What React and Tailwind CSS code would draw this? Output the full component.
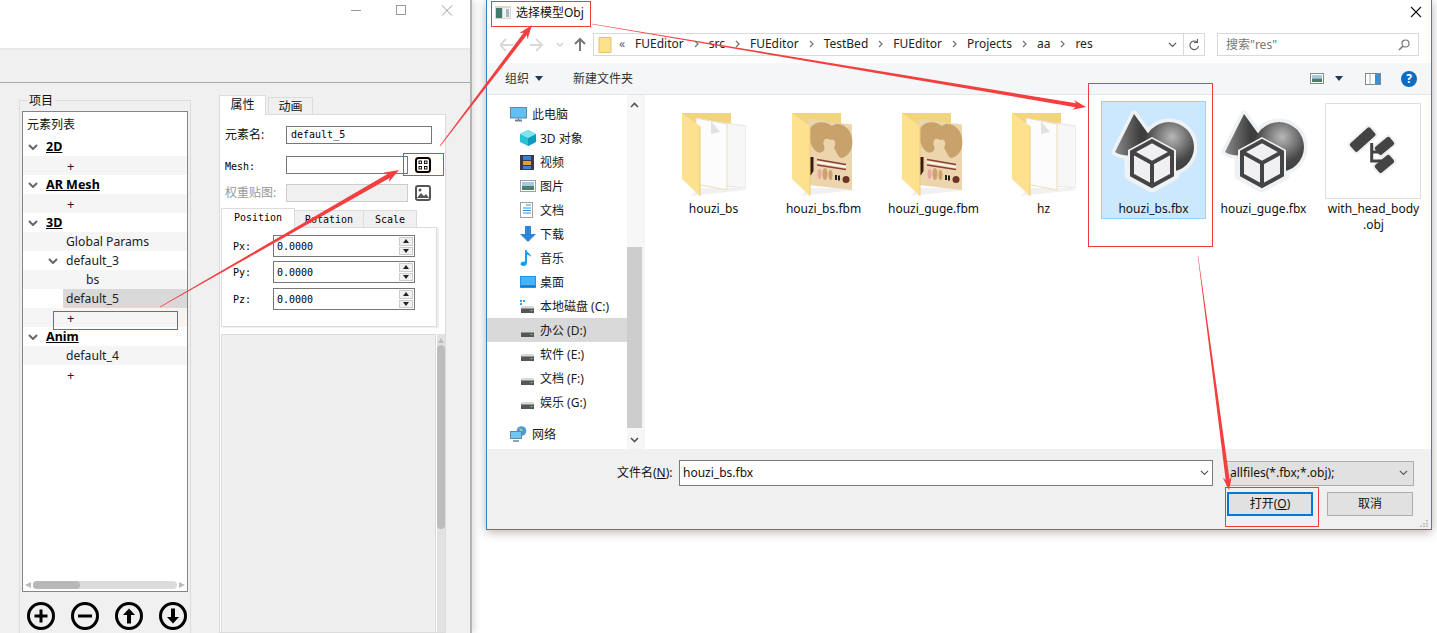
import React from "react";

const mono = "font-['DejaVu_Sans_Mono','Noto_Sans_CJK_SC',monospace]";

function arrowPts(x1, y1, x2, y2, tail, shaft, headW, headL) {
  const len = Math.hypot(x2 - x1, y2 - y1);
  const ux = (x2 - x1) / len, uy = (y2 - y1) / len;
  const nx = -uy, ny = ux;
  const bx = x2 - ux * headL, by = y2 - uy * headL;
  const nkx = x2 - ux * headL * 0.8, nky = y2 - uy * headL * 0.8;
  const p = [
    [x1 + nx * tail / 2, y1 + ny * tail / 2],
    [nkx + nx * shaft / 2, nky + ny * shaft / 2],
    [bx + nx * headW / 2, by + ny * headW / 2],
    [x2, y2],
    [bx - nx * headW / 2, by - ny * headW / 2],
    [nkx - nx * shaft / 2, nky - ny * shaft / 2],
    [x1 - nx * tail / 2, y1 - ny * tail / 2],
  ];
  return p.map((q) => q.map((v) => v.toFixed(1)).join(",")).join(" ");
}

function Annotations() {
  return (
    <svg className="absolute left-0 top-0 pointer-events-none" width="1437" height="633" viewBox="0 0 1437 633">
      <g fill="none" stroke="#ee3b3b" strokeWidth="1">
        <rect x="53.5" y="311.5" width="124" height="18" />
        <rect x="403.5" y="153.5" width="40" height="22" />
        <rect x="491.5" y="1.5" width="99" height="25" />
        <rect x="1088.5" y="83.5" width="124" height="163" />
        <rect x="1225.5" y="487.5" width="93" height="39" />
      </g>
      <g fill="#f33f3f">
        <polygon points={arrowPts(160, 307, 399, 170, 0.8, 4.5, 11, 15)} />
        <polygon points={arrowPts(440, 146, 532, 25, 0.8, 4, 10, 14)} />
        <polygon points={arrowPts(592, 24, 1086, 107, 0.6, 4, 10, 13)} />
        <polygon points={arrowPts(1198, 256, 1229, 490, 0.4, 4, 9, 13)} />
      </g>
    </svg>
  );
}

function Chevron({ size = 10, color = "#666", w = 2 }) {
  return (
    <svg width={size} height={size * 0.6} viewBox="0 0 10 6" className="shrink-0">
      <path d="M1 1l4 4 4-4" fill="none" stroke={color} strokeWidth={w} />
    </svg>
  );
}

function Row({ alt, bold, text, pl, chevronAt, sel, plus }) {
  const base = chevronAt !== undefined ? pl - chevronAt - 10 : pl;
  const look = bold
    ? "font-bold underline text-[12.5px] text-black"
    : plus
    ? "text-[13px] text-[#4a0a1a] pt-px"
    : "text-[12.2px] text-[#222]";
  return (
    <div className={`flex items-center shrink-0 h-[19px] ${alt ? "bg-[#f5f5f5]" : "bg-white"}`}>
      {chevronAt !== undefined && (
        <span style={{ marginLeft: chevronAt }} className="flex w-[10px]">
          <Chevron />
        </span>
      )}
      <span
        style={{ marginLeft: sel ? base - 3 : base }}
        className={`${sel ? "bg-[#d9d9d9] flex-1 pl-[3px] h-[19px] flex items-center" : ""} ${look} leading-[19px] whitespace-nowrap`}
      >
        {text}
      </span>
    </div>
  );
}

function CircleBtn({ kind }) {
  return (
    <svg width="28" height="28" viewBox="0 0 28 28">
      <circle cx="14" cy="14" r="12.5" fill="none" stroke="#000" strokeWidth="3" />
      {kind === "plus" && <path d="M14 7.500v13M7.500 14h13" stroke="#000" strokeWidth="3" />}
      {kind === "minus" && <path d="M7 14h14" stroke="#000" strokeWidth="3" />}
      {kind === "up" && <path d="M14 6.500l6 6.500h-4v8.500h-4V13H8z" fill="#000" />}
      {kind === "down" && <path d="M14 21.500l6-6.500h-4V6.500h-4V15H8z" fill="#000" />}
    </svg>
  );
}

function SpinBox() {
  return (
    <div className="flex items-center w-[142px] h-[22px] border border-[#777] bg-white pl-[3px] pr-[1px]">
      <span className={`${mono} text-[10px] text-black flex-1`}>0.0000</span>
      <div className="flex flex-col w-[14px] h-[18px] gap-px">
        <div className="flex-1 bg-[#f0f0f0] border border-[#ccc] flex items-center justify-center">
          <svg width="6" height="4" viewBox="0 0 6 4"><path d="M3 0l3 4H0z" fill="#222" /></svg>
        </div>
        <div className="flex-1 bg-[#f0f0f0] border border-[#ccc] flex items-center justify-center">
          <svg width="6" height="4" viewBox="0 0 6 4"><path d="M3 4l3-4H0z" fill="#222" /></svg>
        </div>
      </div>
    </div>
  );
}

function LeftWindow() {
  return (
    <div className="w-[472px] h-[633px] shrink-0 flex flex-col bg-[#f0f0f0] border-r-2 border-[#b4b4b4] shadow-[3px_0_6px_rgba(0,0,0,0.12)] overflow-hidden">
      <div className="h-[48px] bg-white flex items-start shrink-0">
        <svg width="469" height="24" viewBox="0 0 469 24">
          <path d="M351 10.500h10" stroke="#999" fill="none" />
          <rect x="396.500" y="5.500" width="9" height="9" stroke="#999" fill="none" />
          <path d="M442 5.500l10 10M452 5.500l-10 10" stroke="#999" fill="none" />
        </svg>
      </div>
      <div className="h-[2px] bg-[#e8e8e8] shrink-0" />
      <div className="h-[33px] bg-[#f0f0f0] border-b border-[#a8a8a8] shrink-0" />
      <div className="flex flex-1 pl-[19px] min-h-0">
        <fieldset className="w-[172px] h-[560px] mt-[9px] border border-[#dcdcdc] px-[2px] shrink-0">
          <legend className="ml-[5px] px-[2px] text-[12px] leading-[16px] text-[#111]">
            <span className="relative top-px">项目</span>
          </legend>
          <div className="mt-[3px] w-[166px] h-[481px] border border-[#84848c] bg-white flex flex-col">
            <div className="h-[25px] shrink-0 pl-[4px] text-[12px] leading-[25px] text-[#111]">元素列表</div>
            <Row bold text="2D" pl={23} chevronAt={5} />
            <Row alt text="+" pl={44} plus />
            <Row bold text="AR Mesh" pl={23} chevronAt={5} />
            <Row alt text="+" pl={44} plus />
            <Row bold text="3D" pl={23} chevronAt={5} />
            <Row alt text="Global Params" pl={43} />
            <Row text="default_3" pl={43} chevronAt={25} />
            <Row alt text="bs" pl={63} />
            <Row text="default_5" pl={43} sel />
            <Row alt text="+" pl={44} plus />
            <Row bold text="Anim" pl={23} chevronAt={5} />
            <Row alt text="default_4" pl={43} />
            <Row text="+" pl={44} plus />
            <div className="flex-1" />
            <div className="h-[12px] shrink-0 flex items-center pl-[2px] pr-[2px] gap-[1px]">
              <svg width="6" height="6" viewBox="0 0 6 6" className="shrink-0 mr-[1px]"><path d="M0 3l6-3v6z" fill="#bbb" /></svg>
              <div className="flex-1 h-[8px] bg-[#dcdcdc] rounded-[4px] flex">
                <div className="w-[47px] h-[8px] bg-[#b8b8b8] rounded-[4px]" />
              </div>
              <svg width="6" height="6" viewBox="0 0 6 6" className="shrink-0 ml-[1px]"><path d="M6 3L0 0v6z" fill="#bbb" /></svg>
            </div>
          </div>
          <div className="flex gap-[16px] mt-[10px] ml-[5px]">
            <CircleBtn kind="plus" />
            <CircleBtn kind="minus" />
            <CircleBtn kind="up" />
            <CircleBtn kind="down" />
          </div>
        </fieldset>
        <div className="ml-[28px] mt-[11px] w-[227px] flex flex-col">
          <div className="flex items-end h-[20px] shrink-0 text-[12px] text-[#111]">
            <div className="w-[47px] h-[20px] bg-white border border-b-0 border-[#dcdcdc] text-center leading-[18px] relative top-px">属性</div>
            <div className="w-[45px] h-[17px] ml-[2px] bg-[#f0f0f0] border border-b-0 border-[#dcdcdc] text-center leading-[17px]">动画</div>
          </div>
          <div className="flex-1 bg-white border border-[#dcdcdc] flex flex-col min-h-0">
            <div className="flex items-center h-[18px] mt-[11px] pl-[5px] shrink-0">
              <span className="w-[61px] text-[12px] text-[#111]">元素名:</span>
              <div className={`${mono} w-[146px] h-[18px] border border-[#777] text-[10px] leading-[15px] pl-[4px] text-black`}>default_5</div>
            </div>
            <div className="flex items-center h-[18px] mt-[12px] pl-[5px] shrink-0">
              <span className={`${mono} w-[61px] text-[10px] text-black pt-[2px]`}>Mesh:</span>
              <div className="w-[122px] h-[18px] border border-[#777]" />
              <svg width="16" height="16" viewBox="0 0 16 16" className="ml-[7px]">
                <rect x="1" y="1" width="14" height="14" rx="2.500" fill="none" stroke="#000" strokeWidth="2" />
                <rect x="4" y="4" width="2.500" height="2.500" fill="none" stroke="#000" strokeWidth="0.900" />
                <rect x="9.500" y="4" width="2.500" height="2.500" fill="none" stroke="#000" strokeWidth="0.900" />
                <rect x="4" y="9.500" width="2.500" height="2.500" fill="none" stroke="#000" strokeWidth="0.900" />
                <rect x="9.500" y="9.500" width="2.500" height="2.500" fill="none" stroke="#000" strokeWidth="0.900" />
              </svg>
            </div>
            <div className="flex items-center h-[18px] mt-[10px] pl-[5px] shrink-0">
              <span className="w-[61px] text-[12px] text-[#999]">权重贴图:</span>
              <div className="w-[122px] h-[18px] border border-[#ccc] bg-[#f0f0f0]" />
              <svg width="16" height="16" viewBox="0 0 16 16" className="ml-[7px]">
                <rect x="1" y="1" width="14" height="14" rx="2" fill="#fff" stroke="#555" strokeWidth="2" />
                <path d="M2 13l4-5 3 3 2-2 3 4z" fill="#555" />
                <circle cx="5" cy="5" r="1.500" fill="#555" />
              </svg>
            </div>
            <div className={`${mono} flex items-end ml-[1px] mt-[5px] h-[20px] shrink-0 text-[10px] text-black`}>
              <div className="w-[74px] h-[20px] bg-white border border-b-0 border-[#dcdcdc] text-center leading-[18px] relative top-px">Position</div>
              <div className="w-[69px] h-[17px] bg-[#f0f0f0] border border-b-0 border-l-0 border-[#dcdcdc] text-center leading-[17px]">Rotation</div>
              <div className="w-[53px] h-[17px] bg-[#f0f0f0] border border-b-0 border-l-0 border-[#dcdcdc] text-center leading-[17px]">Scale</div>
            </div>
            <div className={`${mono} ml-[1px] w-[216px] h-[100px] shrink-0 border border-[#dcdcdc] bg-white shadow-[2px_1px_0_#eeeeee] pt-[7px] pl-[11px] text-[10px] text-black`}>
              <div className="flex items-center"><span className="w-[40px]">Px:</span><SpinBox /></div>
              <div className="flex items-center mt-[4px]"><span className="w-[40px]">Py:</span><SpinBox /></div>
              <div className="flex items-center mt-[5px]"><span className="w-[40px]">Pz:</span><SpinBox /></div>
            </div>
            <div className="flex flex-1 mt-[7px] ml-[1px] min-h-0">
              <div className="w-[216px] bg-[#efefef] border border-[#dcdcdc] border-b-0" />
              <div className="w-[8px] ml-px bg-[#e2e2e2] flex flex-col items-center">
                <svg width="6" height="7" viewBox="0 0 6 7" className="mt-[3px] shrink-0"><path d="M3 1l3 5H0z" fill="#bbb" /></svg>
                <div className="w-[8px] h-[184px] mt-[1px] bg-[#bdbdbd] rounded-[4px] shrink-0" />
              </div>
            </div>
          </div>
        </div>
      </div>
    </div>
  );
}

function Sep() {
  return (
    <svg width="5" height="8" viewBox="0 0 5 8" className="shrink-0 mx-[10px]">
      <path d="M1 1l3 3-3 3" fill="none" stroke="#777" strokeWidth="1.300" />
    </svg>
  );
}

const navIcons = {
  pc: (
    <svg width="17" height="15" viewBox="0 0 17 15">
      <rect x="0.500" y="0.500" width="16" height="10.500" fill="#5ec0f5" stroke="#6d8396" />
      <path d="M5 13.500h7" stroke="#6d8396" strokeWidth="2" /><path d="M8.500 11v2" stroke="#6d8396" />
    </svg>
  ),
  cube: (
    <svg width="16" height="16" viewBox="0 0 16 16">
      <path d="M8 0l8 4v8l-8 4-8-4V4z" fill="#28c1d8" /><path d="M8 8l8-4v8l-8 4z" fill="#0d9cc0" /><path d="M8 0l8 4-8 4-8-4z" fill="#7fe3ee" />
    </svg>
  ),
  film: (
    <svg width="14" height="15" viewBox="0 0 14 15">
      <rect width="14" height="15" fill="#3a3a4a" />
      <rect x="3" y="1" width="8" height="4" fill="#3b7fd6" /><rect x="3" y="6" width="8" height="4" fill="#e0a030" /><rect x="3" y="11" width="8" height="3" fill="#3b7fd6" />
    </svg>
  ),
  pic: (
    <svg width="16" height="12" viewBox="0 0 16 12">
      <rect x="0.500" y="0.500" width="15" height="11" fill="#fff" stroke="#9aa0a6" />
      <rect x="2" y="2" width="12" height="4" fill="#a4c8e8" /><rect x="2" y="6" width="12" height="4" fill="#4a7f62" />
    </svg>
  ),
  doc: (
    <svg width="13" height="16" viewBox="0 0 13 16">
      <rect x="0.500" y="0.500" width="12" height="15" fill="#fff" stroke="#9aa0a6" />
      <path d="M6 3h5M3 6h8M3 8.500h8M3 11h8" stroke="#3a8fd6" />
    </svg>
  ),
  down: (
    <svg width="16" height="16" viewBox="0 0 16 16"><path d="M5 0h6v8h5l-8 8-8-8h5z" fill="#2f86d8" /></svg>
  ),
  music: (
    <svg width="12" height="16" viewBox="0 0 12 16">
      <path d="M5 0h1.500c.5 3 4.500 3.500 4.500 7-1-1.500-2.500-2-4-2.500V13c0 1.800-1.700 3-3.500 3S0 15 .6 13.400 3.500 11 5 11.700z" fill="#12a0f0" />
    </svg>
  ),
  desk: (
    <svg width="16" height="12" viewBox="0 0 16 12">
      <rect width="16" height="12" fill="#1e96ea" /><rect x="1" y="1" width="14" height="9" fill="#47b4f7" /><path d="M1 10h14" stroke="#0a5da8" />
    </svg>
  ),
  net: (
    <svg width="17" height="16" viewBox="0 0 17 16">
      <circle cx="11.500" cy="5" r="4.800" fill="#4a9ad8" /><path d="M9 2.500l4 1-2 3z" fill="#9ed0a0" />
      <rect x="0.500" y="5.500" width="11" height="7" fill="#6ec6f5" stroke="#6d8396" /><path d="M3 15h6" stroke="#6d8396" strokeWidth="1.500" />
    </svg>
  ),
};

function Drive({ win }) {
  return (
    <svg width="15" height="13" viewBox="0 0 15 13">
      {win && <path d="M0 0h2v2H0zM3 0h2v2H3zM0 3h2v2H0z" fill="#1ea8f0" />}
      <path d="M2 6h11l2 3H0z" fill="#d8d8d8" />
      <rect x="1" y="8.500" width="13" height="4.500" fill="#555" />
      <rect x="10.500" y="10" width="2" height="1" fill="#6fdc6f" />
    </svg>
  );
}

function NavRow({ icon, text, top, active }) {
  return (
    <div className={`h-[24px] flex items-center text-[12px] text-[#1a1a1a] shrink-0 ${active ? "bg-[#d9d9d9]" : ""}`}>
      <span className={top ? "ml-[23px] w-[22px] flex" : "ml-[33px] w-[20px] flex"}>{icon}</span>
      <span className="whitespace-nowrap pt-[2px]">{text}</span>
    </div>
  );
}

function Folder({ doc }) {
  return (
    <svg width="64" height="86" viewBox="0 0 64 86">
      <path d="M0 1h49v12H0z" fill="#f3d47e" />
      <path d="M8 84l56-6-6-2-40 0z" fill="#e4e4e4" opacity="0.500" />
      {doc === "blank" && (
        <g>
          <path d="M22 8l42 6v62l-42-4z" fill="#f7f7f7" stroke="#e4e4e4" />
          <path d="M14 6l31 6v66l-31-6z" fill="#fcfcfc" stroke="#eadfbc" />
          <path d="M29 9l9 11-9 2z" fill="#e2e2e2" />
        </g>
      )}
      {doc === "tex" && (
        <g>
          <path d="M16 7l44 5.500V78l-44-5z" fill="#ecd5ad" />
          <path d="M18 18C20 9 34 8 40 14 46 9 58 14 60 26 62 38 56 44 50 46 46 46 45 40 42 36 45 30 42 26 38 28 34 25 30 28 32 34 34 38 30 42 25 40 19 36 16 26 18 18z" fill="#c9a26b" />
          <path d="M18 45h3.500v14L19 63l-3 1 2-6z" fill="#3b1a14" />
          <path d="M25 47.500l29 5M25 53l29 4.500" stroke="#8a4038" strokeWidth="1.300" fill="none" />
          <path d="M25 50l29 5" stroke="#fff" strokeWidth="1.500" fill="none" />
          <ellipse cx="27.500" cy="62" rx="2" ry="5" fill="#e8a9a0" />
          <ellipse cx="33" cy="62" rx="2.500" ry="6" fill="#cfa070" />
          <ellipse cx="38.500" cy="63" rx="2" ry="5" fill="#cfa070" />
          <path d="M43 63h2v5h-2zM46 63.500h2v5h-2z" fill="#222" />
          <circle cx="54" cy="67.500" r="3.500" fill="#6e3327" />
        </g>
      )}
      <path d="M0 1l18 13v70L0 67z" fill="#fde18f" />
      <path d="M18 14v70" stroke="#eccb74" fill="none" />
    </svg>
  );
}

function FbxIcon() {
  return (
    <svg width="86" height="92" viewBox="0 0 86 92">
      <defs>
        <radialGradient id="sph" cx="0.560" cy="0.300" r="0.700">
          <stop offset="0" stopColor="#b8b8b8" /><stop offset="0.700" stopColor="#484848" /><stop offset="1" stopColor="#3e3e3e" />
        </radialGradient>
        <linearGradient id="con" x1="0" y1="0" x2="1" y2="0">
          <stop offset="0" stopColor="#8a8a8a" /><stop offset="0.600" stopColor="#3e3e3e" />
        </linearGradient>
      </defs>
      <g stroke="#eff2f5" strokeWidth="7" strokeLinejoin="round">
        <path d="M23 6L4 44c8 6 30 4 42-6z" fill="#eff2f5" />
        <circle cx="58" cy="39" r="25" fill="#eff2f5" />
        <path d="M41 31l22 12v24l-22 12-22-12V43z" fill="#eff2f5" strokeWidth="11" />
      </g>
      <path d="M23 6L4 44c8 6 30 4 42-6z" fill="url(#con)" />
      <circle cx="58" cy="39" r="25" fill="url(#sph)" />
      <path d="M41 29l24 13v26L41 81 17 68V42z" fill="#eff2f5" />
      <path d="M41 33l20 11v23L41 78 21 67V44z" fill="#f0f0f2" stroke="#444" strokeWidth="4" strokeLinejoin="miter" />
      <path d="M21 44l20 11 20-11M41 55v23" fill="none" stroke="#444" strokeWidth="4" />
    </svg>
  );
}

function ObjIcon() {
  return (
    <div className="w-[96px] h-[96px] -ml-[2px] border border-[#dedede] bg-white">
      <svg width="94" height="94" viewBox="0 0 94 94">
        <g fill="#444" stroke="#efefef" strokeWidth="4" paintOrder="stroke">
          <rect x="23" y="30" width="27" height="11" rx="2" transform="rotate(-42 36.700 35.300)" />
          <rect x="49" y="37" width="19" height="10" rx="2" transform="rotate(-40 58.300 42)" />
          <rect x="49" y="55" width="19" height="10" rx="2" transform="rotate(-40 58.300 60)" />
        </g>
        <path d="M45.700 39v18h12M45.700 48h7" fill="none" stroke="#444" strokeWidth="3" />
      </svg>
    </div>
  );
}

function FileItem({ name, icon, pt, sel }) {
  return (
    <div className={`w-[105px] h-[118px] shrink-0 flex flex-col items-center border ${sel ? "bg-[#cce8ff] border-[#99d1ff]" : "border-transparent"}`}>
      <div style={{ paddingTop: pt }} className="h-[99px] flex justify-center shrink-0">{icon}</div>
      <div className="text-[12px] leading-[16px] text-[#111] text-center w-[103px] break-all">{name}</div>
    </div>
  );
}

function Dialog() {
  return (
    <div className="ml-[14px] w-[946px] h-[530px] shrink-0 bg-white border border-t-0 border-[#3c7fbf] shadow-[0_2px_10px_rgba(0,0,0,0.3)] flex flex-col">
      <div className="h-[33px] flex items-start shrink-0">
        <svg width="16" height="13" viewBox="0 0 16 13" className="ml-[8px] mt-[6px] shrink-0">
          <rect width="16" height="13" fill="#d8d8d8" /><rect x="1" y="2" width="6" height="10" fill="#3f7a6a" /><rect x="8" y="2" width="7" height="10" fill="#f2f2f2" /><rect x="11" y="3" width="3" height="8" fill="#a8b8c0" />
        </svg>
        <span className="ml-[5px] text-[12px] leading-[26px] text-[#111]">选择模型Obj</span>
        <svg width="12" height="12" viewBox="0 0 12 12" className="ml-auto mr-[9px] mt-[6px]">
          <path d="M1 1l10 10M11 1L1 11" stroke="#111" strokeWidth="1.100" />
        </svg>
      </div>
      <div className="h-[30px] flex items-start shrink-0">
        <svg width="100" height="23" viewBox="0 0 100 23" className="shrink-0 ml-[13px]">
          <path d="M0 12h12M5 6l-6 6 6 6" transform="translate(1 0)" fill="none" stroke="#d8d8d8" strokeWidth="1.800" />
          <path d="M30 12h12M36 6l6 6-6 6" fill="none" stroke="#d8d8d8" strokeWidth="1.800" />
          <path d="M57 10l3 3 3-3" fill="none" stroke="#d0d0d0" strokeWidth="1.300" />
          <path d="M80 18V6M75 11l5-5 5 5" fill="none" stroke="#777" strokeWidth="2" />
        </svg>
        <div className="w-[612px] h-[23px] border border-[#d9d9d9] flex items-center shrink-0 text-[12px] text-[#222] pl-[4px] pb-[2px] -ml-[7px]">
          <svg width="14" height="16" viewBox="0 0 14 16" className="shrink-0 mt-[2px]">
            <path d="M1 .5h12v15H1z" fill="#fde18f" stroke="#e2c46a" />
          </svg>
          <span className="ml-[7px] text-[#666] text-[12px] w-[9px]">«</span>
          <span className="ml-[7px]">FUEditor</span><Sep />
          <span>src</span><Sep />
          <span>FUEditor</span><Sep />
          <span>TestBed</span><Sep />
          <span>FUEditor</span><Sep />
          <span>Projects</span><Sep />
          <span>aa</span><Sep />
          <span>res</span>
          <span className="ml-auto mr-[3px] mt-[2px]"><Chevron size={9} color="#555" w={1.3} /></span>
          <div className="w-[21px] h-[21px] border-l border-[#d9d9d9] flex items-center justify-center ml-[3px] mt-[2px]">
            <svg width="11" height="12" viewBox="0 0 11 12"><path d="M9.500 7a4.300 4.300 0 1 1-1.500-4M8.500 0v3.500H5" fill="none" stroke="#666" strokeWidth="1.200" /></svg>
          </div>
        </div>
        <div className="w-[202px] h-[23px] ml-[12px] border border-[#d9d9d9] flex items-center pl-[8px] pr-[8px] text-[12px] text-[#777]">
          <span>搜索"res"</span>
          <svg width="12" height="12" viewBox="0 0 12 12" className="ml-auto">
            <circle cx="7.500" cy="4.500" r="3.500" fill="none" stroke="#777" strokeWidth="1.200" /><path d="M5 7l-4 4" stroke="#777" strokeWidth="1.600" />
          </svg>
        </div>
      </div>
      <div className="h-[32px] bg-[#f5f6f7] border-b border-[#e6e6e6] flex items-center shrink-0 text-[12px] text-[#333]">
        <span className="ml-[18px]">组织</span>
        <svg width="8" height="5" viewBox="0 0 8 5" className="ml-[6px]"><path d="M0 0h8L4 5z" fill="#223a55" /></svg>
        <span className="ml-[30px]">新建文件夹</span>
        <svg width="14" height="11" viewBox="0 0 14 11" className="ml-auto">
          <rect x="0.500" y="0.500" width="13" height="10" fill="#fff" stroke="#888" /><rect x="2" y="2" width="10" height="3.500" fill="#a4c8e8" /><rect x="2" y="5.500" width="10" height="3.500" fill="#4a7f62" />
        </svg>
        <svg width="8" height="5" viewBox="0 0 8 5" className="ml-[11px]"><path d="M0 0h8L4 5z" fill="#223a55" /></svg>
        <svg width="16" height="12" viewBox="0 0 16 12" className="ml-[22px]">
          <rect x="0.500" y="0.500" width="15" height="11" fill="#fff" stroke="#888" /><rect x="10" y="1" width="5" height="10" fill="#3a90d8" /><path d="M5 1v10" stroke="#aaa" />
        </svg>
        <div className="ml-[20px] mr-[14px] w-[16px] h-[16px] rounded-full bg-[#0b6cc4] text-white text-[12px] font-bold leading-[16px] text-center">?</div>
      </div>
      <div className="h-[354px] flex shrink-0">
        <div className="w-[140px] shrink-0 pt-[7px] flex flex-col">
          <NavRow top icon={navIcons.pc} text="此电脑" />
          <NavRow icon={navIcons.cube} text="3D 对象" />
          <NavRow icon={navIcons.film} text="视频" />
          <NavRow icon={navIcons.pic} text="图片" />
          <NavRow icon={navIcons.doc} text="文档" />
          <NavRow icon={navIcons.down} text="下载" />
          <NavRow icon={navIcons.music} text="音乐" />
          <NavRow icon={navIcons.desk} text="桌面" />
          <NavRow icon={<Drive win />} text="本地磁盘 (C:)" />
          <NavRow active icon={<Drive />} text="办公 (D:)" />
          <NavRow icon={<Drive />} text="软件 (E:)" />
          <NavRow icon={<Drive />} text="文档 (F:)" />
          <NavRow icon={<Drive />} text="娱乐 (G:)" />
          <div className="mt-[8px]"><NavRow top icon={navIcons.net} text="网络" /></div>
        </div>
        <div className="w-[15px] shrink-0 bg-[#f7f7f7] flex flex-col items-center">
          <svg width="9" height="6" viewBox="0 0 9 6" className="mt-[7px] shrink-0"><path d="M1 5l3.500-3.500L8 5" fill="none" stroke="#555" strokeWidth="1.600" /></svg>
          <div className="w-[15px] h-[181px] bg-[#cdcdcd] mt-[139px] shrink-0" />
          <svg width="9" height="6" viewBox="0 0 9 6" className="mt-[9px] shrink-0"><path d="M1 1l3.500 3.500L8 1" fill="none" stroke="#555" strokeWidth="1.600" /></svg>
        </div>
        <div className="w-[3px] shrink-0 bg-[#f5f5f5]" />
        <div className="flex-1 flex gap-[5px] pl-[16px] pt-[6px] items-start">
          <FileItem name="houzi_bs" pt={10} icon={<Folder doc="blank" />} />
          <FileItem name="houzi_bs.fbm" pt={10} icon={<Folder doc="tex" />} />
          <FileItem name="houzi_guge.fbm" pt={10} icon={<Folder doc="tex" />} />
          <FileItem name="hz" pt={10} icon={<Folder doc="blank" />} />
          <FileItem name="houzi_bs.fbx" pt={6} sel icon={<FbxIcon />} />
          <FileItem name="houzi_guge.fbx" pt={6} icon={<FbxIcon />} />
          <FileItem name={<>with_head_body<br />.obj</>} pt={1} icon={<ObjIcon />} />
        </div>
      </div>
      <div className="flex-1 bg-[#f0f0f0] flex flex-col">
        <div className="flex items-center mt-[11px] ml-[130px]">
          <span className="w-[62px] text-[12px] text-[#111]">文件名(<u>N</u>):</span>
          <div className="w-[534px] h-[26px] bg-white border border-[#7a7a7a] flex items-center pl-[3px] pr-[3px] text-[12px] text-[#111]">
            <span>houzi_bs.fbx</span>
            <span className="ml-auto"><Chevron size={9} color="#555" w={1.2} /></span>
          </div>
          <div className="w-[188px] h-[25px] ml-[13px] bg-[#e1e1e1] border border-[#adadad] flex items-center pl-[3px] pr-[5px] text-[12px] text-[#111]">
            <span>allfiles(*.fbx;*.obj);</span>
            <span className="ml-auto"><Chevron size={9} color="#555" w={1.2} /></span>
          </div>
        </div>
        <div className="flex items-start mt-[6px] ml-[740px]">
          <div className="w-[86px] h-[24px] bg-[#e1e1e1] border-2 border-[#0078d7] text-center text-[12px] leading-[20px] text-[#111]">打开(<u>O</u>)</div>
          <div className="w-[86px] h-[24px] ml-[14px] bg-[#e1e1e1] border border-[#adadad] text-center text-[12px] leading-[22px] text-[#111]">取消</div>
          <svg width="8" height="7" viewBox="0 0 8 7" className="ml-[7px] mt-[28px]">
            <path d="M6 0h2v1.500H6zM3 3h2v1.500H3zM6 3h2v1.500H6zM0 5.500h2V7H0zM3 5.500h2V7H3zM6 5.500h2V7H6z" fill="#bbb" />
          </svg>
        </div>
      </div>
    </div>
  );
}

export default function App() {
  return (
    <div className="relative flex items-start w-[1437px] h-[633px] overflow-hidden bg-white font-['Noto_Sans','Noto_Sans_CJK_SC',sans-serif]">
      <LeftWindow />
      <Dialog />
      <Annotations />
    </div>
  );
}
